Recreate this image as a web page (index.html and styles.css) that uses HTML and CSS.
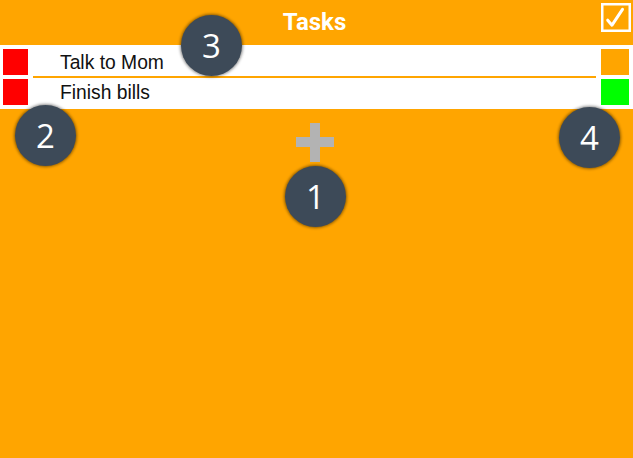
FILE: index.html
```html
<!DOCTYPE html>
<html>
<head>
<meta charset="utf-8">
<link rel="stylesheet" href="styles.css">
</head>
<body>
<div class="app">
  <header class="bar">
    <span></span>
    <h1 class="title">Tasks</h1>
    <span class="done">
      <svg width="30" height="29" viewBox="0 0 30 29">
        <rect x="1.25" y="1.25" width="27.5" height="26.5" fill="none" stroke="#fff" stroke-width="2.5"/>
        <path d="M6.7 17.2 L11 22.2 L21.5 6.3" fill="none" stroke="#fff" stroke-width="3" stroke-linecap="round" stroke-linejoin="round"/>
      </svg>
    </span>
  </header>
  <ul class="list">
    <li class="row">
      <span class="sq red"></span>
      <span class="label sep">Talk to Mom</span>
      <span class="sq sq-r orange"></span>
    </li>
    <li class="row row2">
      <span class="sq red"></span>
      <span class="label">Finish bills</span>
      <span class="sq sq-r green"></span>
    </li>
  </ul>
  <div class="add">
    <svg width="38" height="39" viewBox="0 0 38 39">
      <rect x="0" y="14" width="38" height="10" fill="#b3b3b3"/>
      <rect x="14" y="0" width="10" height="39" fill="#b3b3b3"/>
    </svg>
  </div>
  <span class="badge b1">1</span>
  <span class="badge b2">2</span>
  <span class="badge b3">3</span>
  <span class="badge b4">4</span>
</div>
</body>
</html>
```
FILE: styles.css
```css
html, body {
  margin: 0;
  padding: 0;
  background: #ffa500;
}
.app {
  position: relative;
  width: 633px;
  height: 458px;
  overflow: hidden;
  font-family: "Liberation Sans", Arial, sans-serif;
}
.bar {
  height: 45px;
  display: grid;
  grid-template-columns: 1fr auto 1fr;
  align-items: start;
}
.title {
  margin: 0;
  padding-top: 6px;
  font-family: Roboto, "Liberation Sans", sans-serif;
  font-weight: 700;
  font-size: 24px;
  line-height: 32px;
  color: #fff;
  margin-left: -4px;
}
.done {
  justify-self: end;
  margin-top: 3px;
  margin-right: 2px;
  display: flex;
}
.list {
  list-style: none;
  margin: 0;
  padding: 4px 0;
  background: #fff;
}
.row {
  display: flex;
  align-items: flex-start;
}
.row2 {
  margin-top: 1px;
}
.sq {
  width: 25px;
  height: 26px;
  margin-left: 3px;
  flex: none;
}
.sq-r {
  width: 28px;
  margin-left: 0;
  margin-right: 4px;
}
.red { background: #ff0000; }
.orange { background: #ffa500; }
.green { background: #00ff00; }
.label {
  flex: 1;
  margin: 0 5px;
  padding-left: 27px;
  height: 26px;
  font-size: 19.3px;
  line-height: 28px;
  color: #111;
}
.sep {
  height: 27px;
  border-bottom: 2px solid #ffa500;
}
.add {
  display: flex;
  justify-content: center;
  padding-top: 14px;
  padding-right: 3px;
}
.badge {
  position: absolute;
  width: 61px;
  height: 61px;
  border-radius: 50%;
  background: #3d4a58;
  box-shadow: 0 0 3px 1px rgba(0,0,0,0.45);
  color: #fff;
  font-family: "Open Sans", sans-serif;
  font-size: 33px;
  line-height: 61px;
  text-align: center;
}
.b1 { left: 285px; top: 166px; }
.b2 { left: 15px; top: 105px; }
.b3 { left: 181px; top: 15px; }
.b4 { left: 559px; top: 107px; }
```
